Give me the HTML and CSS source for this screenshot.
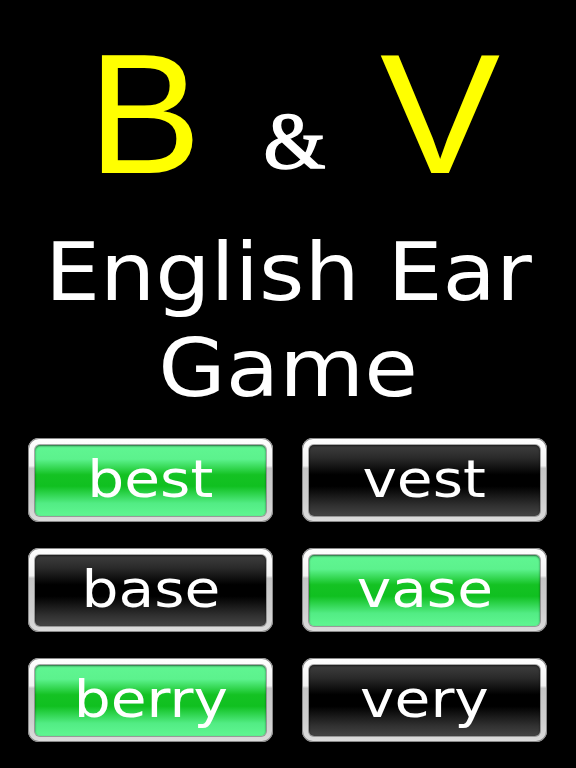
FILE: index.html
```html
<!DOCTYPE html>
<html>
<head>
<meta charset="utf-8">
<link rel="stylesheet" href="styles.css">
</head>
<body>
<div class="page">
  <div class="logo">
    <span class="big b">B</span>
    <span class="amp">&amp;</span>
    <span class="big v">V</span>
  </div>
  <div class="title"><span class="stretch">English Ear</span><br><span class="stretch">Game</span></div>
  <div class="grid">
    <div class="btn green"><div class="face"><span class="word">best</span></div></div>
    <div class="btn black"><div class="face"><span class="word">vest</span></div></div>
    <div class="btn black"><div class="face"><span class="word">base</span></div></div>
    <div class="btn green"><div class="face"><span class="word">vase</span></div></div>
    <div class="btn green"><div class="face"><span class="word">berry</span></div></div>
    <div class="btn black"><div class="face"><span class="word">very</span></div></div>
  </div>
</div>
</body>
</html>
```
FILE: styles.css
```css
html, body {
  margin: 0;
  padding: 0;
  background: #000;
}
.page {
  width: 576px;
  height: 768px;
  background: #000;
  overflow: hidden;
}
.logo {
  height: 195px;
  padding-top: 29px;
  box-sizing: border-box;
  display: flex;
  align-items: baseline;
  padding-left: 88px;
}
.big {
  font-family: "Liberation Sans", Arial, sans-serif;
  font-size: 170px;
  line-height: 170px;
  color: #ffff00;
}
.amp {
  font-family: "Liberation Serif", "Times New Roman", serif;
  font-size: 80px;
  color: #fff;
  margin-left: 62px;
  margin-right: 54px;
  position: relative;
  top: -5px;
  -webkit-text-stroke: 1.5px #fff;
}
.v {
  display: inline-block;
  transform: scaleX(1.06);
  transform-origin: left center;
}
.title {
  margin-top: 30px;
  font-family: "DejaVu Sans", Verdana, sans-serif;
  font-size: 80px;
  line-height: 96px;
  color: #fff;
  text-align: center;
}
.stretch {
  display: inline-block;
  transform: scaleX(1.09);
}
.grid {
  margin-top: 21px;
  margin-left: 28px;
  display: grid;
  grid-template-columns: 245px 245px;
  grid-auto-rows: 84px;
  column-gap: 29px;
  row-gap: 26px;
}
.btn {
  border-radius: 11px;
  padding: 7px 7px 6px 7px;
  background: linear-gradient(to bottom, #ffffff 0%, #f2f2f2 33%, #c6c6c6 36%, #cfcfcf 75%, #dcdcdc 100%);
  box-shadow: inset 0 0 0 1px #8a8a8a;
  box-sizing: border-box;
}
.face {
  height: 100%;
  border-radius: 5px;
  display: flex;
  align-items: center;
  justify-content: center;
  box-shadow: inset 0 1px 2px rgba(0,0,0,0.6), 0 0 0 1px rgba(90,90,90,0.5);
}
.green .face {
  background: linear-gradient(to bottom, #60f692 0%, #5cf28d 20%, #14c223 42%, #10c020 58%, #52ec84 82%, #60f692 100%);
}
.black .face {
  background: linear-gradient(to bottom, #3e3e3e 0%, #2a2a2a 18%, #000 42%, #000 58%, #303030 85%, #444 100%);
}
.word {
  font-family: "DejaVu Sans", Verdana, sans-serif;
  font-size: 52px;
  color: #fff;
  display: inline-block;
  transform: scaleX(1.12);
  line-height: 1;
  position: relative;
  top: -2px;
}
```
